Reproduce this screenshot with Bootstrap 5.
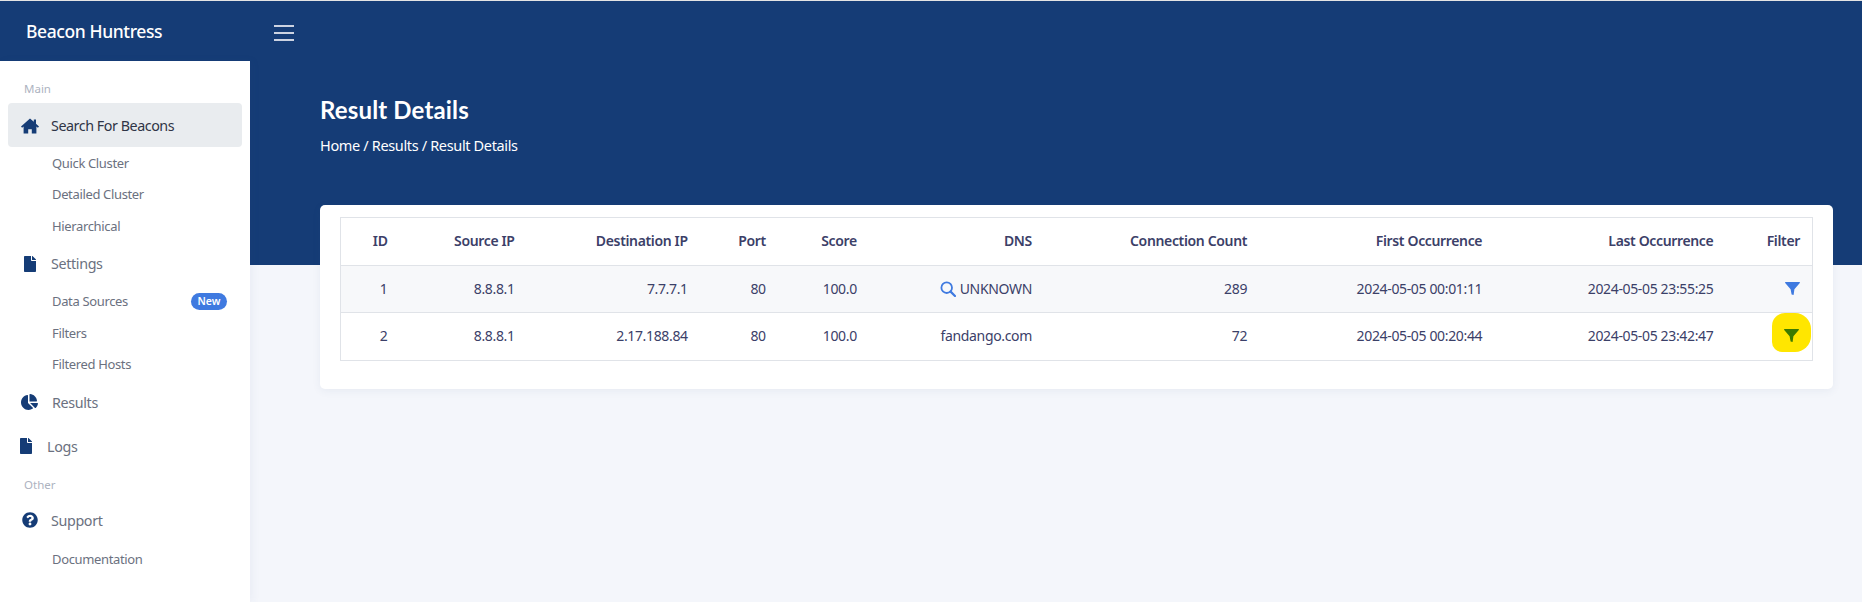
<!DOCTYPE html>
<html lang="en">
<head>
<meta charset="utf-8">
<title>Result Details</title>
<link href="https://cdn.jsdelivr.net/npm/bootstrap@5.3.0/dist/css/bootstrap.min.css" rel="stylesheet">
<style>
:root{--navy:#153c76;--ink:#3b4068;}
html,body{height:100%;overflow:hidden}
body{font-family:"Noto Sans","Liberation Sans",sans-serif;background:#f4f6fb;color:var(--ink);font-size:14px;letter-spacing:-.35px}
.shell{height:100vh;border-top:1px solid #e4e4e4}
.topbar{height:60px;background:var(--navy);flex:none}
.brand{width:250px;padding-left:26px;font-size:17.5px;font-weight:500;color:#fff;letter-spacing:-.4px;flex:none}
.burger{width:20px;height:16px;margin-left:24px;margin-top:4px;border:0;padding:0;background:none;gap:5px}
.burger i{display:block;height:2px;background:#ccd3e2}
.side{width:250px;flex:none;background:#fff;padding:0 8px;box-shadow:3px 0 8px rgba(60,80,130,.05);position:relative;z-index:1}
.sec{font-size:11.5px;color:#adb3bf;padding-left:16px;line-height:16px;letter-spacing:0}
.sec-a{margin-top:20px;margin-bottom:6px}
.sec-b{margin-top:9px;margin-bottom:5px}
.item{height:44px;border-radius:4px;padding-left:13px;color:#6b7180;font-size:14.3px;text-decoration:none}
.item.on{background:#e9ecef;color:#2f3446;padding-top:2px;letter-spacing:-.45px}
.ico{fill:var(--navy);flex:none}
.ico-w{width:18px;margin-right:12px}
.ico-wide{margin-right:13px}
.ico-log{margin-left:-1px;margin-right:15px}
.sub{height:31.4px;padding-left:44px;padding-right:15px;font-size:13px;color:#6b7180;text-decoration:none}
.sub-first{margin-top:1px}
.sub-doc{margin-top:1.5px}
.tag{background:#3f7ae0;color:#fff;font-size:10.5px;font-weight:600;border-radius:9px;padding:0 6.5px;line-height:17px;letter-spacing:0}
.hero{height:204px;background:var(--navy);padding:34px 0 0 70px;flex:none}
.hero h1{font-family:"Lato",sans-serif;font-size:24px;font-weight:700;color:#fff;margin:0 0 10px;line-height:30px;letter-spacing:.15px}
.crumb{color:#fff;font-size:14.5px;line-height:20px;letter-spacing:-.35px}
.panel{margin:-60px 29px 0 70px;background:#fff;border-radius:5px;padding:12px 20px 28px;box-shadow:0 2px 8px rgba(60,80,130,.07)}
.grid-t{width:100%;table-layout:fixed;border-collapse:collapse;border:1px solid #e0e3e8;color:var(--ink);font-size:14px;margin:0}
.grid-t th,.grid-t td{padding:0 12px 2px;text-align:right;vertical-align:middle;border-top:1px solid #e0e3e8;white-space:nowrap}
.grid-t th{height:48px;font-weight:600}
.grid-t td{height:47.5px}
.grid-t tbody tr:first-child td{background:#f7f8fa;height:47px}
.filter-i{fill:#3f7ae0;width:15px;height:13px;vertical-align:-1px}
.search-i{width:16px;height:16px;vertical-align:-3px;margin-right:4px}
.hl-cell{position:relative}
.hl{position:absolute;right:1px;top:0;width:39px;height:39px;background:#ffe600;border-radius:13px 16px 16px 10px}
.hl svg{position:absolute;right:12px;top:16px;fill:#3b7a00;width:15px;height:13px}
.c1{width:59px}.c2{width:127px}.c3{width:173px}.c4{width:78px}.c5{width:91px}.c6{width:175px}.c7{width:215px}.c8{width:235px}.c9{width:231px}.c10{width:87px}
</style>
</head>
<body>
<div class="shell d-flex flex-column">
  <header class="topbar d-flex align-items-center">
    <div class="brand">Beacon Huntress</div>
    <button class="burger d-flex flex-column" aria-label="Menu"><i></i><i></i><i></i></button>
  </header>
  <div class="d-flex flex-grow-1">
    <nav class="side">
      <div class="sec sec-a">Main</div>
      <a class="item on d-flex align-items-center" href="#"><span class="ico-w d-flex"><svg class="ico" width="18" height="16" viewBox="0 0 18 16"><path d="M9 .5L0 8.4l1.1 1.3 1.5-1.2v7h4.6v-4.3h3.6v4.3h4.6v-7l1.5 1.2L18 8.4l-3-2.7V1.6h-2.2v2.1z"/></svg></span>Search For Beacons</a>
      <a class="sub sub-first d-flex align-items-center" href="#">Quick Cluster</a>
      <a class="sub d-flex align-items-center" href="#">Detailed Cluster</a>
      <a class="sub d-flex align-items-center" href="#">Hierarchical</a>
      <a class="item d-flex align-items-center" href="#"><span class="ico-w d-flex justify-content-center"><svg class="ico" width="12" height="16" viewBox="0 0 384 512"><path d="M224 136V0H24C10.7 0 0 10.7 0 24v464c0 13.3 10.7 24 24 24h336c13.3 0 24-10.7 24-24V160H248c-13.2 0-24-10.8-24-24zm160-14.1v6.1H256V0h6.1c6.4 0 12.5 2.5 17 7l97.9 98c4.5 4.5 7 10.6 7 16.9z"/></svg></span>Settings</a>
      <a class="sub d-flex align-items-center justify-content-between" href="#">Data Sources<span class="tag">New</span></a>
      <a class="sub d-flex align-items-center" href="#">Filters</a>
      <a class="sub d-flex align-items-center" href="#">Filtered Hosts</a>
      <a class="item d-flex align-items-center" href="#"><span class="ico-w ico-wide d-flex"><svg class="ico" width="17" height="16" viewBox="0 0 544 512"><path d="M527.79 288H290.5l158.03 158.03c6.04 6.04 15.98 6.53 22.19.68 38.7-36.46 65.32-85.61 73.13-140.86 1.34-9.46-6.51-17.85-16.06-17.85zm-15.83-64.8C503.72 103.74 408.26 8.28 288.8.04 279.68-.59 272 7.1 272 16.24V240h223.77c9.14 0 16.82-7.68 16.19-16.8zM224 288V50.71c0-9.55-8.39-17.4-17.84-16.06C86.99 51.49-4.1 155.6.14 280.37 4.5 408.51 114.83 513.59 243.03 511.98c50.4-.63 96.97-16.87 135.26-44.03 7.9-5.6 8.42-17.23 1.57-24.08L224 288z"/></svg></span>Results</a>
      <a class="item d-flex align-items-center" href="#"><svg class="ico ico-log" width="12" height="16" viewBox="0 0 384 512"><path d="M224 136V0H24C10.7 0 0 10.7 0 24v464c0 13.3 10.7 24 24 24h336c13.3 0 24-10.7 24-24V160H248c-13.2 0-24-10.8-24-24zm160-14.1v6.1H256V0h6.1c6.4 0 12.5 2.5 17 7l97.9 98c4.5 4.5 7 10.6 7 16.9z"/></svg>Logs</a>
      <div class="sec sec-b">Other</div>
      <a class="item d-flex align-items-center" href="#"><span class="ico-w d-flex justify-content-center"><svg class="ico" width="16" height="16" viewBox="0 0 512 512"><path d="M504 256c0 136.997-111.043 248-248 248S8 392.997 8 256C8 119.083 119.043 8 256 8s248 111.083 248 248zM262.655 90c-54.497 0-89.255 22.957-116.549 63.758-3.536 5.286-2.353 12.415 2.715 16.258l34.699 26.31c5.205 3.947 12.621 3.008 16.665-2.122 17.864-22.658 30.113-35.797 57.303-35.797 20.429 0 45.698 13.148 45.698 32.958 0 14.976-12.363 22.667-32.534 33.976C247.128 238.528 216 254.941 216 296v4c0 6.627 5.373 12 12 12h56c6.627 0 12-5.373 12-12v-1.333c0-28.462 83.186-29.647 83.186-106.667 0-58.002-60.165-102-116.531-102zM256 338c-25.365 0-46 20.635-46 46 0 25.364 20.635 46 46 46s46-20.636 46-46c0-25.365-20.635-46-46-46z"/></svg></span>Support</a>
      <a class="sub sub-doc d-flex align-items-center" href="#">Documentation</a>
    </nav>
    <main class="flex-grow-1">
      <section class="hero">
        <h1>Result Details</h1>
        <div class="crumb">Home / Results / Result Details</div>
      </section>
      <section class="panel">
        <table class="grid-t">
          <colgroup><col class="c1"><col class="c2"><col class="c3"><col class="c4"><col class="c5"><col class="c6"><col class="c7"><col class="c8"><col class="c9"><col class="c10"></colgroup>
          <thead><tr><th>ID</th><th>Source IP</th><th>Destination IP</th><th>Port</th><th>Score</th><th>DNS</th><th>Connection Count</th><th>First Occurrence</th><th>Last Occurrence</th><th>Filter</th></tr></thead>
          <tbody>
            <tr><td>1</td><td>8.8.8.1</td><td>7.7.7.1</td><td>80</td><td>100.0</td><td><svg class="search-i" viewBox="0 0 16 16" fill="none" stroke="#3f7ae0" stroke-width="1.8"><circle cx="6.7" cy="6.7" r="5.3"/><path d="M10.6 10.6L15 15" stroke-width="2.2" stroke-linecap="round"/></svg>UNKNOWN</td><td>289</td><td>2024-05-05 00:01:11</td><td>2024-05-05 23:55:25</td><td><svg class="filter-i" viewBox="0 0 15 13"><path d="M.6 0h13.8c.5 0 .8.6.4 1L9.4 7.2 8.6 13 6.6 12.4 5.6 7.2.2 1C-.2.6.1 0 .6 0z"/></svg></td></tr>
            <tr><td>2</td><td>8.8.8.1</td><td>2.17.188.84</td><td>80</td><td>100.0</td><td>fandango.com</td><td>72</td><td>2024-05-05 00:20:44</td><td>2024-05-05 23:42:47</td><td class="hl-cell"><span class="hl"><svg viewBox="0 0 15 13"><path d="M.6 0h13.8c.5 0 .8.6.4 1L9.4 7.2 8.6 13 6.6 12.4 5.6 7.2.2 1C-.2.6.1 0 .6 0z"/></svg></span></td></tr>
          </tbody>
        </table>
      </section>
    </main>
  </div>
</div>
<script src="https://cdn.jsdelivr.net/npm/bootstrap@5.3.0/dist/js/bootstrap.bundle.min.js"></script>
</body>
</html>
